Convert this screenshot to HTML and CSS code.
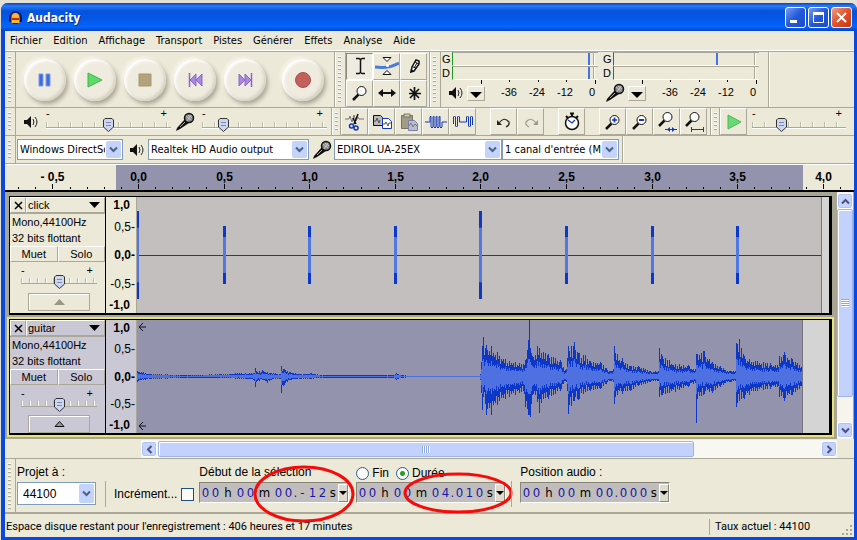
FILE: index.html
```html
<!DOCTYPE html>
<html lang="fr">
<head>
<meta charset="utf-8">
<title>Audacity</title>
<link rel="stylesheet" href="styles.css">
</head>
<body>
<svg width="0" height="0" class="defs" aria-hidden="true">
  <defs>
    <symbol id="speaker" viewBox="0 0 15 14"><path d="M1 5h3l4-4v12l-4-4H1z" fill="#111"/><path d="M10 4q2 3 0 6M12 2q4 5 0 10" fill="none" stroke="#222"/></symbol>
    <symbol id="mic" viewBox="0 0 20 20"><path d="M1 19l1-3 8-9 4 4-9 6z" fill="#111"/><circle cx="14" cy="6" r="4.500" fill="#888" stroke="#111" stroke-width="1.500"/><path d="M11 4l5 4M13 3l4 3M16 3l-4 6" stroke="#ddd" stroke-width=".7"/><path d="M5 15l5-5" stroke="#aaa"/></symbol>
    <symbol id="chev" viewBox="0 0 9 7"><path d="M1 1.500l3.500 3.500L8 1.500" fill="none" stroke="#4d6185" stroke-width="2"/></symbol>
    <symbol id="lens" viewBox="0 0 20 20"><path d="M3 17l5.500-5.500" stroke="#111" stroke-width="2.500"/><circle cx="11.500" cy="8" r="4.500" fill="#fff" stroke="#111"/></symbol>
  </defs>
</svg>
<main class="window">
  <header class="title">
    <svg width="15" height="15" viewBox="0 0 15 15"><circle cx="7.500" cy="7.500" r="6" fill="#152a9a" stroke="#071458"/><path d="M3.500 8q0-5 4-5t4 5v5h-8z" fill="#ffb52c"/><path d="M4 9h7" stroke="#c22c12" stroke-width="2"/><path d="M2 7v5M13 7v5" stroke="#0a1660" stroke-width="2"/></svg>
    <h1>Audacity</h1>
    <button class="cap" aria-label="Réduire"><svg width="19" height="19"><path d="M4 13.500h7" stroke="#fff" stroke-width="3"/></svg></button>
    <button class="cap" aria-label="Agrandir"><svg width="19" height="19"><path d="M4.500 5.500h10v9h-10z" fill="none" stroke="#fff"/><path d="M4 5.500h11" stroke="#fff" stroke-width="3"/></svg></button>
    <button class="cap close" aria-label="Fermer"><svg width="19" height="19"><path d="M5 5l9 9M14 5l-9 9" stroke="#fff" stroke-width="2"/></svg></button>
  </header>
  <nav class="menu">
    <a href="#">Fichier</a><a href="#">Edition</a><a href="#">Affichage</a><a href="#">Transport</a><a href="#">Pistes</a><a href="#">Générer</a><a href="#">Effets</a><a href="#">Analyse</a><a href="#">Aide</a>
  </nav>

  <div class="row row-a">
    <section class="bar transport">
      <i class="grip"></i>
      <button class="round" aria-label="Pause"><svg width="20" height="20"><path d="M4 4h4v12H4zM11 4h4v12h-4z" fill="#3f6ce0" stroke="#7d9bea"/></svg></button>
      <button class="round" aria-label="Lecture"><svg width="20" height="20"><path d="M3 3l14 7-14 7z" fill="#5cdb68" stroke="#3eb34c"/></svg></button>
      <button class="round" aria-label="Stop"><svg width="20" height="20"><path d="M4 4h12v12H4z" fill="#b3a27c" stroke="#a59772"/></svg></button>
      <button class="round" aria-label="Début"><svg width="20" height="20"><path d="M4.500 3v14" stroke="#8a66cc" stroke-width="1.500"/><path d="M11 4v12l-6-6zM17 4v12l-6-6z" fill="#a988e0" stroke="#8a66cc"/></svg></button>
      <button class="round" aria-label="Fin"><svg width="20" height="20"><path d="M16.500 3v14" stroke="#8a66cc" stroke-width="1.500"/><path d="M4 4v12l6-6zM10 4v12l6-6z" fill="#a988e0" stroke="#8a66cc"/></svg></button>
      <button class="round rec" aria-label="Enregistrer"><svg width="20" height="20"><circle cx="10" cy="10" r="7.500" fill="#c4605c" stroke="#a9504c"/></svg></button>
    </section>
    <section class="bar tools">
      <i class="grip"></i>
      <div class="toolgrid">
        <button class="tb on" aria-label="Sélection"><svg width="20" height="20"><path d="M6 2.500h3l1.500 1 1.500-1h3M6 17.500h3l1.500-1 1.500 1h3M10.500 3v14" fill="none" stroke="#111" stroke-width="1.500"/></svg></button>
        <button class="tb" aria-label="Niveau"><svg width="24" height="22"><path d="M8 2.500h8l-4 4zM8 19.500h8l-4-4z" fill="#fff" stroke="#111"/><path d="M0 12q14 2 24-4" fill="none" stroke="#4a7ce0" stroke-width="3"/><circle cx="12.500" cy="10.500" r="1.500" fill="#fff"/></svg></button>
        <button class="tb" aria-label="Dessin"><svg width="20" height="20"><path d="M7 16l1-5 4-7 3 1v3l-5 7z" fill="#fff" stroke="#111" stroke-width="1.500"/><path d="M11 6l4 2M9 11l3 1M13 7l-3 5" stroke="#111"/><path d="M6 17l1-4 3 2z" fill="#111"/></svg></button>
        <button class="tb" aria-label="Zoom"><svg width="20" height="20"><use href="#lens"/></svg></button>
        <button class="tb" aria-label="Glissement"><svg width="20" height="20"><path d="M4 10h12" stroke="#111" stroke-width="2"/><path d="M1 10l5-4v8zM19 10l-5-4v8z" fill="#111"/></svg></button>
        <button class="tb" aria-label="Multi-outils"><svg width="20" height="20"><path d="M10.500 4v13M5 10.500h12M6 6l9 9M15 6l-9 9" stroke="#111" stroke-width="1.700"/></svg></button>
      </div>
    </section>
    <section class="bar meters">
      <i class="grip"></i>
      <div class="meter play">
        <div class="chan"><span>G</span><b><i></i></b></div>
        <div class="chan"><span>D</span><b><i></i></b></div>
        <svg class="mticks" width="150" height="4"><path d="M39.500 0v4M67.500 0v2M96.500 0v2M124.500 0v2M153.500 0v4"/></svg>
        <div class="scale"><svg width="15" height="14"><use href="#speaker"/></svg><button class="drop" aria-label="Options de lecture"></button><span>-36</span><span>-24</span><span>-12</span><span>0</span></div>
      </div>
      <div class="meter record">
        <div class="chan"><span>G</span><b><i></i></b></div>
        <div class="chan"><span>D</span><b></b></div>
        <svg class="mticks" width="150" height="4"><path d="M39.500 0v4M67.500 0v2M96.500 0v2M124.500 0v2M153.500 0v4"/></svg>
        <div class="scale"><svg width="20" height="20"><use href="#mic"/></svg><button class="drop" aria-label="Options d'enregistrement"></button><span>-36</span><span>-24</span><span>-12</span><span>0</span></div>
      </div>
    </section>
  </div>

  <div class="row row-b">
    <section class="bar mixer">
      <i class="grip"></i>
      <svg width="15" height="14"><use href="#speaker"/></svg>
      <label class="slider"><span>-</span><span>+</span><input type="range" min="0" max="100" value="50" aria-label="Volume de sortie"></label>
      <svg width="20" height="20"><use href="#mic"/></svg>
      <label class="slider"><span>-</span><span>+</span><input type="range" min="0" max="100" value="14" aria-label="Volume d'entrée"></label>
    </section>
    <section class="bar edit">
      <i class="grip"></i>
      <button class="tb" aria-label="Couper"><svg width="22" height="22"><path d="M1 8h4l1-3 2 6 2-7 2 6 2-4 1 2h5" fill="none" stroke="#777"/><path d="M14 3l-4 10M9 7l3 6" stroke="#111" stroke-width="1.500"/><circle cx="7.500" cy="15" r="2" fill="none" stroke="#1238b8" stroke-width="1.500"/><circle cx="12" cy="17" r="2" fill="none" stroke="#1238b8" stroke-width="1.500"/></svg></button>
      <button class="tb" aria-label="Copier"><svg width="22" height="22"><path d="M2.500 4.500h7l2 2v8h-9z" fill="#bbb" stroke="#111"/><path d="M3 10h2l1-3 2 5 1-3" fill="none" stroke="#555"/><path d="M11.500 7.500h6l3 3v7h-9z" fill="#fff" stroke="#1238b8"/><path d="M12 13h2l1-2 2 4 1-3h2" fill="none" stroke="#555"/></svg></button>
      <button class="tb" aria-label="Coller"><svg width="22" height="22"><path d="M3.500 4.500h11v13h-11z" fill="#a39c82" stroke="#77735f"/><path d="M6 3h6v3H6z" fill="#ccc" stroke="#77735f"/><path d="M10.500 9.500h6l3 3v7h-9z" fill="#b9bdd0" stroke="#7a80a8"/><path d="M11 15l2-3 2 4 2-3 2 2" fill="none" stroke="#777"/></svg></button>
      <button class="tb" aria-label="Rogner"><svg width="24" height="20"><path d="M1 10h5V5q1-2 1 0v10q1 2 2 0V5q1-2 1 0v10q1 2 2 0V5q1-2 1 0v10q1 2 2 0V5q1-2 1 0v10q1 2 2 0v-5h5" fill="none" stroke="#1238b8"/></svg></button>
      <button class="tb" aria-label="Silence"><svg width="24" height="20"><path d="M2.500 12V5q1-2 2 0v9q1 2 2 0V5q1-2 2 0v5h7V5q1-2 2 0v9q1 2 2 0V5q1-2 2 0v8" fill="none" stroke="#1238b8"/></svg></button>
      <button class="tb gap" aria-label="Annuler"><svg width="20" height="20"><path d="M5 11q5-7 10-1 1 3-3 5" fill="none" stroke="#222" stroke-width="1.200"/><path d="M3 8v5h5z" fill="#222"/></svg></button>
      <button class="tb" aria-label="Refaire"><svg width="20" height="20"><path d="M15 11q-5-7-10-1-1 3 3 5" fill="none" stroke="#999" stroke-width="1.200"/><path d="M17 8v5h-5z" fill="#999"/></svg></button>
      <button class="tb gap" aria-label="Minuteur"><svg width="20" height="22"><circle cx="10" cy="12" r="6.500" fill="#fff" stroke="#111" stroke-width="1.500"/><path d="M8 2.500h4M10 3v3M4 5l2 2M16 5l-2 2" stroke="#111" stroke-width="2"/><path d="M6 9l4 3 3-3" fill="none" stroke="#1238b8" stroke-width="1.200"/></svg></button>
      <button class="tb gap" aria-label="Zoom avant"><svg width="20" height="20"><use href="#lens"/><path d="M9 8h5M11.500 5.500v5" stroke="#1238b8" stroke-width="1.700"/></svg></button>
      <button class="tb" aria-label="Zoom arrière"><svg width="20" height="20"><use href="#lens"/><path d="M9 8h5" stroke="#1238b8" stroke-width="2"/></svg></button>
      <button class="tb" aria-label="Ajuster la sélection"><svg width="22" height="22"><use href="#lens" y="-2" width="20" height="20"/><path d="M9 18.500h12" stroke="#1238b8"/><path d="M11 18.500l3-2.500v5zM19 18.500l-3-2.500v5z" fill="#1238b8"/></svg></button>
      <button class="tb" aria-label="Ajuster le projet"><svg width="22" height="22"><use href="#lens" y="-2" width="20" height="20"/><path d="M8.500 16v5M20.500 16v5M9 18.500h12" stroke="#1238b8"/></svg></button>
    </section>
    <section class="bar speed">
      <i class="grip"></i>
      <button class="tb" aria-label="Lecture à vitesse"><svg width="20" height="20"><path d="M4 3l13 7-13 7z" fill="#6bd877" stroke="#4cb85a"/></svg></button>
      <label class="slider"><span>-</span><span>+</span><input type="range" min="0" max="100" value="29" aria-label="Vitesse"></label>
    </section>
  </div>

  <div class="row row-c">
    <section class="bar device">
      <i class="grip"></i>
      <span class="combo host"><select aria-label="Hôte audio"><option>Windows DirectSound</option></select><i><svg width="9" height="7"><use href="#chev"/></svg></i></span>
      <svg width="15" height="14"><use href="#speaker"/></svg>
      <span class="combo out"><select aria-label="Sortie"><option>Realtek HD Audio output</option></select><i><svg width="9" height="7"><use href="#chev"/></svg></i></span>
      <svg width="20" height="20"><use href="#mic"/></svg>
      <span class="combo in"><select aria-label="Entrée"><option>EDIROL UA-25EX</option></select><i><svg width="9" height="7"><use href="#chev"/></svg></i></span>
      <span class="combo ch"><select aria-label="Canaux"><option>1 canal d'entrée (Mono)</option></select><i><svg width="9" height="7"><use href="#chev"/></svg></i></span>
    </section>
  </div>

  <svg class="ruler" id="ruler" role="img" aria-label="Règle temporelle"></svg>

  <div class="project">
    <div class="tracks">
      <article class="track">
        <div class="panel">
          <div class="name"><button aria-label="Fermer la piste"><svg width="9" height="9"><path d="M1 1l7 7M8 1l-7 7" stroke="#000" stroke-width="1.500"/></svg></button><button class="tname">click<svg width="11" height="6"><path d="M0 0h11l-5.500 6z"/></svg></button></div>
          <p>Mono,44100Hz<br>32 bits flottant</p>
          <div class="ms"><button>Muet</button><button>Solo</button></div>
          <label class="slider"><span>-</span><span>+</span><input type="range" min="0" max="100" value="50" aria-label="Gain"></label>
          <button class="fold" aria-label="Replier"><svg width="11" height="6"><path d="M0 6h11l-5.500-6z" fill="#9a9789"/></svg></button>
        </div>
        <div class="vr"><b>1,0</b><span>0,5-</span><b>0,0-</b><span>-0,5-</span><b>-1,0</b></div>
        <svg class="wave" id="click" role="img" aria-label="Forme d'onde click"></svg>
      </article>
      <article class="track sel">
        <div class="panel">
          <div class="name"><button aria-label="Fermer la piste"><svg width="9" height="9"><path d="M1 1l7 7M8 1l-7 7" stroke="#000" stroke-width="1.500"/></svg></button><button class="tname">guitar<svg width="11" height="6"><path d="M0 0h11l-5.500 6z"/></svg></button></div>
          <p>Mono,44100Hz<br>32 bits flottant</p>
          <div class="ms"><button>Muet</button><button>Solo</button></div>
          <label class="slider"><span>-</span><span>+</span><input type="range" min="0" max="100" value="50" aria-label="Gain"></label>
          <button class="fold" aria-label="Replier"><svg width="11" height="6"><path d="M1 5.500h9l-4.500-5z" fill="#999" stroke="#111"/></svg></button>
        </div>
        <div class="vr"><b>1,0</b><span>0,5-</span><b>0,0-</b><span>-0,5-</span><b>-1,0</b></div>
        <svg class="wave" id="guitar" role="img" aria-label="Forme d'onde guitar"></svg>
      </article>
    </div>
    <div class="vscroll">
      <button aria-label="Haut"><svg width="9" height="7"><path d="M1 5.500L4.500 2 8 5.500" fill="none" stroke="#4d4f85" stroke-width="2"/></svg></button>
      <div class="thumb"><i></i></div>
      <button class="end" aria-label="Bas"><svg width="9" height="7"><path d="M1 1.500L4.500 5 8 1.500" fill="none" stroke="#4d4f85" stroke-width="2"/></svg></button>
    </div>
  </div>
  <div class="hscroll">
    <button aria-label="Gauche"><svg width="7" height="9"><path d="M5.500 1L2 4.500 5.500 8" fill="none" stroke="#4d4f85" stroke-width="2"/></svg></button>
    <div class="thumb"><i></i></div>
    <button class="end" aria-label="Droite"><svg width="7" height="9"><path d="M1.500 1L5 4.500 1.500 8" fill="none" stroke="#4d4f85" stroke-width="2"/></svg></button>
  </div>

  <section class="selection">
    <i class="grip"></i>
    <div class="col rate"><label for="rate">Projet à :</label><span class="combo"><select id="rate"><option>44100</option></select><i><svg width="9" height="7"><use href="#chev"/></svg></i></span></div>
    <label class="snap">Incrément... <input type="checkbox"></label>
    <div class="col start"><span class="head">Début de la sélection</span>
      <div class="time"><i>0</i><i>0</i><b>h</b><i>0</i><i>0</i><b class="m">m</b><i>0</i><i>0</i><i class="dot">.</i><i>-</i><i>1</i><i>2</i><b class="s">s</b><button aria-label="Format du début"></button></div>
      <svg class="mark m1" viewBox="0 0 104 58"><ellipse cx="52" cy="29" rx="49" ry="27"/></svg>
    </div>
    <div class="col length"><div class="head"><label><input type="radio" name="mode">Fin</label><label><input type="radio" name="mode" checked>Durée</label></div>
      <div class="time"><i>0</i><i>0</i><b>h</b><i>0</i><i>0</i><b class="m">m</b><i>0</i><i>4</i><i class="dot">.</i><i>0</i><i>1</i><i>0</i><b class="s">s</b><button aria-label="Format de la durée"></button></div>
      <svg class="mark m2" viewBox="0 0 110 42"><ellipse cx="55" cy="21" rx="53" ry="19"/></svg>
    </div>
    <div class="col pos"><span class="head">Position audio :</span>
      <div class="time"><i>0</i><i>0</i><b>h</b><i>0</i><i>0</i><b class="m">m</b><i>0</i><i>0</i><i class="dot">.</i><i>0</i><i>0</i><i>0</i><b class="s">s</b><button aria-label="Format de la position"></button></div>
    </div>
  </section>
  <footer class="status"><span>Espace disque restant pour l'enregistrement : 406 heures et 17 minutes</span><span class="actual">Taux actuel : 44100</span>
    <svg class="size" width="12" height="12"><path d="M9 1h2v2H9zM5 5h2v2H5zM9 5h2v2H9zM1 9h2v2H1zM5 9h2v2H5zM9 9h2v2H9z" fill="#aaa792"/></svg></footer>
</main>
<script src="app.js"></script>
</body>
</html>
```
FILE: app.js
```js
const ORIGIN = 134, SECOND = 171.2;
const rect = (x, y, w, h, fill) => `<rect x="${x}" y="${y}" width="${w}" height="${h}" fill="${fill}"/>`;

function drawRuler() {
  let out = rect(111, 1, 687, 25, '#9493ae');
  for (let n = -8; n <= 41; n++) {
    const x = Math.round(ORIGIN + n * SECOND / 10) - .5;
    const major = n % 5 === 0;
    out += `<path d="M${x} ${major ? 20 : 23}V25" stroke="#000"/>`;
    if (major) {
      const label = (n < 0 ? '- ' : '') + Math.abs(n / 10).toFixed(1).replace('.', ',');
      out += `<text x="${x}" y="17">${label}</text>`;
    }
  }
  document.getElementById('ruler').innerHTML = out;
}

function drawClick() {
  let out = rect(0, 0, 684, 120, '#c2bfbe') + rect(684, 0, 1, 120, '#77757a') + rect(0, 58, 684, 1, '#0d3bb4');
  for (let n = 0; n < 8; n++) {
    const x = Math.round(n * SECOND / 2), h = n % 4 ? 29 : 44, w = n ? 3 : 2;
    out += rect(n ? x : 0, 58 - h, w, h * 2, '#0c37cc') + rect(n ? x : 0, 58 - h * .62, w, h * 1.24, '#5077e4');
  }
  document.getElementById('click').innerHTML = out;
}

/* time offset in pixels, peak above, peak below */
const PEAKS = [[0,5,5],[6,4,3],[13,2,2],[50,1,1],[83,2,1],[108,3,2],[116,3,3],[118,8,10],[120,4,4],[125,6,3],[130,4,6],[136,3,2],[143,2,2],[144,10,16],[147,7,8],[153,4,3],[163,2,2],[173,3,2],[185,1,1],[250,1,1],[257,1,1],[259,3,3],[263,1,1],[275,0,0],[342,0,0],
[343,2,3],[345,30,33],[346,39,20],[349,31,38],[354,30,38],[360,24,28],[368,17,22],[378,14,18],[386,12,14],[388,16,30],[391,36,38],[392,56,38],[393,28,40],[395,20,18],[400,30,25],[402,28,36],[406,24,22],[411,22,22],[418,18,17],[423,16,14],[428,6,4],[430,18,14],[431,30,37],[437,34,24],[441,23,23],[448,21,15],[453,15,14],[463,14,12],[469,8,7],[473,5,4],[476,7,5],[477,30,27],[480,22,18],[485,18,17],[493,10,14],[501,10,9],[513,5,5],[521,5,4],[522,28,20],[525,20,18],[538,12,15],[551,11,10],[558,7,6],[559,22,46],[560,22,22],[567,25,17],[575,14,16],[583,10,10],[593,5,5],[598,5,4],[599,33,30],[602,37,24],[607,20,22],[618,15,14],[633,13,12],[640,11,10],[642,20,20],[647,24,24],[655,17,18],[665,10,10]];

function drawGuitar() {
  const mid = 56;
  let peaks = '', body = '', k = 0;
  for (let x = 0; x < 665; x++) {
    while (k < PEAKS.length - 2 && x >= PEAKS[k + 1][0]) k++;
    const [ax, au, ad] = PEAKS[k], [bx, bu, bd] = PEAKS[k + 1];
    const t = (x - ax) / (bx - ax);
    const up = au + (bu - au) * t, down = ad + (bd - ad) * t;
    const noise = Math.abs(Math.sin(x * 12.9898) * 43758.5453 % 1);
    const f = x === ax ? 1 : (x % 2 ? .55 : .78) + noise * .22;
    peaks += `M${x + .5} ${mid - Math.round(up * f)}V${mid + 1 + Math.round(down * f)}`;
    body += `M${x + .5} ${mid - Math.round(Math.min(up * .5, 17) * f)}V${mid + 1 + Math.round(Math.min(down * .5, 17) * f)}`;
  }
  document.getElementById('guitar').innerHTML =
    rect(0, 0, 665, 120, '#9493ae') + rect(665, 0, 1, 120, '#77757f') +
    `<path d="${peaks}" stroke="#0d37c8"/><path d="${body}" stroke="#4f70e0"/>` +
    '<path d="M9 7H2M6 3L2 7l4 4M9 106H2M6 102l-4 4 4 4" fill="none" stroke="#111"/>';
}

drawRuler();
drawClick();
drawGuitar();
```
FILE: styles.css
```css
* { box-sizing: border-box; }
body { margin: 0; padding-top: 3px; background: #e3e1d4; font: 11px/14px "DejaVu Sans Condensed", "DejaVu Sans", sans-serif; color: #000; }
button { padding: 0; border: 0; background: none; font: inherit; color: inherit; }
svg { display: block; flex: none; }
.defs { position: absolute; }
i, b { font-style: normal; }

.window { display: flex; flex-direction: column; min-height: calc(100vh - 3px); margin-left: 1px; border: solid #0b48e0; border-width: 0 3px 3px 4px; border-radius: 7px 7px 0 0; background: #ece9d8; }
.title { display: flex; align-items: center; gap: 2px; height: 28px; margin: 0 -3px 0 -4px; padding: 1px 5px 0 7px; border-radius: 7px 7px 0 0; background: linear-gradient(#0a3ecb, #2a7bf5 3px, #0453dd 8px, #0458e8 16px, #0565fb 24px, #0344c4); }
.title h1 { flex: 1; margin: 0 0 0 2px; color: #fff; font: bold 12px/18px "DejaVu Sans Condensed", sans-serif; text-shadow: 1px 1px #0a2a80; }
.cap { width: 21px; height: 21px; border: 1px solid #fff; border-radius: 3px; background: linear-gradient(135deg, #7a9cf0, #2358dc 50%, #1d4bc4); }
.cap.close { background: linear-gradient(135deg, #f0a080, #e0502c 50%, #c23a16); }
.menu { display: flex; gap: 11px; height: 20px; padding: 3px 5px; border-bottom: 1px solid #fff; }
.menu a { color: #000; text-decoration: none; }

.row { display: flex; border-top: 1px solid #aca899; }
.row-a { height: 56px; }
.row-b { height: 28px; }
.row-c { height: 28px; }
.bar { display: flex; align-items: center; border-right: 1px solid #aca899; box-shadow: 1px 0 #fff; }
.grip { align-self: stretch; flex: none; width: 11px; border-right: 1px solid #aca899; background: repeating-linear-gradient(#fff 0 1px, #aca899 1px 2px, transparent 2px 4px) content-box; padding: 4px 4px 3px 3px; }

.transport { width: 330px; }
.round { display: grid; place-items: center; width: 42px; height: 42px; margin-left: 8px; border-radius: 50%; background: #efebdf; box-shadow: inset 2px 2px 3px #fff, inset -2px -2px 3px #d5d0c1, 2px 3px 4px #aaa594, -2px -2px 3px #f8f5ea; }
.rec { margin-left: 16px; }
.tools { width: 95px; }
.toolgrid { display: grid; grid-template-columns: repeat(3, 27px); }
.tb { display: grid; place-items: center; flex: none; width: 27px; height: 27px; border: 1px solid; border-color: #fff #aca899 #aca899 #fff; }
.tb.on { border-color: #8a877a #fff #fff #8a877a; background: #eeebe0; }
.meters { width: 339px; align-items: stretch; }
.meter { width: 157px; padding-left: 1px; }
.meter + .meter { margin-left: 4px; }
.chan { display: flex; height: 14px; font: 11px/14px "Liberation Sans", sans-serif; }
.chan span { width: 10px; }
.chan b { flex: 1; position: relative; border: solid #fff; border-width: 0 0 1px; border-left: 1px solid #1f9a28; border-top: 1px solid #aca899; background: linear-gradient(#fff, #fff) right 3px top / 1px 100% no-repeat, linear-gradient(#aca899, #aca899) right 4px top / 1px 100% no-repeat; }
.record .chan b { border-left-color: #a8382c; }
.chan b i { display: block; width: 2px; height: 12px; margin-left: 93%; background: #4a70e8; }
.record .chan b i { margin-left: 70%; }
.mticks { width: 100%; stroke: #000; }
.scale { display: flex; align-items: center; height: 18px; font: 11px/14px "Liberation Sans", sans-serif; }
.scale > svg { margin-left: 6px; }
.record .scale > svg { margin-left: 2px; }
.drop { width: 18px; height: 15px; margin-left: 4px; border: 1px solid; border-color: #fff #aca899 #aca899 #fff; }
.record .drop { margin-left: 3px; }
.drop::before { content: ""; display: block; width: 0; margin: 3px auto 0; border: 6px solid transparent; border-top-color: #000; border-bottom: 0; }
.scale span { width: 28px; text-align: right; padding-bottom: 3px; }
.drop + span { margin-left: 4px; }
.scale span:last-child { width: 22px; }

.mixer { width: 327px; }
.mixer > svg { margin-left: 7px; }
.mixer > .slider + svg { margin-left: 4px; }
.slider { display: grid; grid-template-columns: 1fr 1fr; align-content: start; width: 125px; height: 26px; margin-left: 8px; font: 11px/9px "Liberation Sans", sans-serif; }
.slider span { height: 8px; }
.panel .slider span { padding-top: 1px; }
.slider span:nth-child(2) { text-align: right; padding-right: 4px; }
.slider input { grid-column: 1 / 3; appearance: none; width: 100%; height: 17px; margin: 0; background: linear-gradient(#aca899, #aca899) 0 10px / 100% 1px no-repeat, linear-gradient(#fff, #fff) 0 11px / 100% 1px no-repeat, repeating-linear-gradient(90deg, #bdb9aa 0 1px, #fff 1px 2px, transparent 2px 12px) 0 5px / 100% 5px no-repeat; }
.slider input::-webkit-slider-thumb { appearance: none; width: 11px; height: 14px; background: url("data:image/svg+xml,%3Csvg xmlns='http://www.w3.org/2000/svg' width='11' height='14'%3E%3Cpath d='M2 .5h7l1.500 1.500v7l-5 4.500-5-4.500V2z' fill='%23ccd6ee' stroke='%23333'/%3E%3Cpath d='M3 4.500h5M3 7.500h5' stroke='%23788ab5'/%3E%3C/svg%3E") no-repeat; }
.mixer > svg + .slider:last-child { margin-left: 7px; }
.edit { width: 379px; }
.edit .gap { margin-left: 14px; }
.speed { flex: 1; border-right: 0; box-shadow: none; }
.edit .grip, .speed .grip { width: 9px; padding-right: 2px; }
.speed .slider { width: 94px; margin-left: 5px; }

.device { width: 618px; }
.device > svg { margin: 0 4px 0 6px; }
.device > .out + svg { margin: 0 2px 0 3px; }
.combo { display: inline-block; position: relative; height: 21px; }
.combo select { appearance: none; width: 100%; height: 100%; padding: 0 17px 0 2px; border: 1px solid #7f9db9; border-radius: 0; background: #fff; color: #000; font: inherit; }
.combo i { position: absolute; top: 2px; right: 2px; bottom: 2px; display: grid; place-items: center; width: 15px; border-radius: 2px; background: #c3d3fb; pointer-events: none; }
.host { width: 106px; margin-left: 1px; }
.out { width: 161px; }
.in { width: 168px; }
.ch { width: 117px; }

.ruler { width: 100%; height: 29px; border-top: 1px solid #aca899; border-bottom: 2px solid #000; box-shadow: inset 0 1px #fff; font: bold 12px "Liberation Sans", sans-serif; text-anchor: middle; }

.project { display: flex; padding-right: 1px; background: #a9a595; }
.tracks { flex: 1; min-width: 0; padding: 4px 5px 0 4px; }
.track { display: flex; height: 119px; border: solid #000; border-width: 1px 3px 2px 1px; background: #d4d4d4; font: 11px/16px "Liberation Sans", sans-serif; }
.track.sel { height: 116px; margin: 4px 0; outline: 2px solid #e6e283; }
.panel { flex: none; display: flex; flex-direction: column; width: 96px; border-right: 1px solid #000; background: #ece9d8; }
.name, .ms { display: flex; flex: none; height: 16px; }
.name button, .ms button { border: 1px solid; border-color: #fff #aca899 #aca899 #fff; }
.name button { display: grid; place-items: center; width: 16px; line-height: 13px; }
.name .tname { flex: 1; display: flex; align-items: center; justify-content: space-between; padding: 0 4px 0 1px; }
.ms button { flex: 1; line-height: 13px; }
.panel p { margin: 0; padding: 0 2px; height: 33px; border-top: 1px solid #aca899; }
.panel .slider { width: 76px; margin: 3px 0 0 11px; }
.panel .slider input { background: linear-gradient(#aca899, #aca899) 0 10px / 100% 1px no-repeat, repeating-linear-gradient(90deg, #bdb9aa 0 1px, #fff 1px 2px, transparent 2px 8px) 0 5px / 100% 5px no-repeat; }
.fold { display: grid; place-items: center; width: 62px; height: 18px; margin: 2px 0 0 18px; border: 1px solid #aca899; box-shadow: inset 1px 1px #fff; }
.vr { flex: none; display: flex; flex-direction: column; justify-content: space-between; width: 31px; padding-right: 1px; border-right: 1px solid #aca899; background: #ece9d8; text-align: right; font: 12px/16px "Liberation Sans", sans-serif; }
.vr b:first-child { margin-bottom: -7px; padding-right: 5px; }
.vr b:last-child { margin-top: -7px; padding-right: 5px; }
.sel .panel, .sel .vr { background: #c9c8d4; }
.wave { flex: 1; min-width: 0; height: 100%; overflow: hidden; }

.vscroll { display: flex; flex-direction: column; width: 16px; padding: 1px 0; background: #f6f4ec; }
.vscroll button, .hscroll button { display: grid; place-items: center; flex: none; width: 16px; height: 16px; border: 1px solid #fff; border-radius: 3px; background: #c6d4fb; box-shadow: inset 0 0 0 1px #afc3f5; }
.thumb { display: grid; place-items: center; border: 1px solid #9db4ee; border-radius: 2px; background: #c3d2fc; box-shadow: inset 1px 1px #fff; }
.vscroll .thumb { height: 188px; }
.vscroll .end { margin-top: auto; }
.vscroll .thumb i { width: 8px; height: 8px; background: repeating-linear-gradient(#8ea7e8 0 1px, #fff 1px 2px); }
.hscroll { display: flex; height: 18px; margin: 1px 17px 0 136px; background: #f8f7f2; padding: 1px 0; }
.hscroll .thumb { width: 77%; margin-left: 1px; }
.hscroll .thumb i { width: 8px; height: 7px; background: repeating-linear-gradient(90deg, #8ea7e8 0 1px, #fff 1px 2px); }
.hscroll .end { margin-left: auto; }

.selection { display: flex; height: 56px; border-top: 1px solid #aca899; border-bottom: 2px solid #aca899; font: 12px/16px "Liberation Sans", sans-serif; }
.selection .grip { width: 11px; }
.col { position: relative; padding-top: 5px; }
.col > label, .head { display: flex; height: 18px; }
.head label { display: flex; align-items: center; gap: 3px; margin-right: 7px; }
.rate { width: 88px; padding-right: 9px; margin-left: 1px; }
.rate .combo { display: block; height: 23px; }
.rate select { padding-left: 5px; }
.snap { display: flex; align-items: center; gap: 4px; height: 26px; margin: 22px 0 0 0; padding-left: 8px; border-left: 1px solid #aca899; }
.snap input { appearance: none; width: 13px; height: 13px; margin: 0; border: 1px solid #1d5281; background: #fbfaf7; }
.head input { appearance: none; width: 13px; height: 13px; margin: 0; border: 1px solid #2d5f93; border-radius: 50%; background: #fbfbf9; }
.head input:checked { background: radial-gradient(#21a121 0 2px, #fbfbf9 3px); }
.start { margin-left: 5px; }
.length { margin-left: 7px; padding-right: 6px; }
.pos { margin-left: 8px; }
.length::after { content: ""; position: absolute; right: 0; top: 22px; height: 26px; border-right: 1px solid #aca899; }
.time { display: flex; align-items: center; height: 21px; border: 1px solid; border-color: #87847a #fff #fff #87847a; background: #c2bdbd; font: 13px/18px "DejaVu Sans Condensed", sans-serif; text-align: center; }
.time i { width: 10px; color: #1616a8; }
.time .dot { width: 4px; }
.time b { width: 15px; font-weight: normal; }
.time .m { width: 18px; }
.time .s { width: 11px; }
.time button { width: 10px; height: 18px; border: 1px solid; border-color: #fff #87847a #87847a #fff; background: #e0dccd; }
.time button::before { content: ""; display: block; width: 0; margin: 0 auto; border: 4px solid transparent; border-top-color: #000; border-bottom: 0; }
.mark { position: absolute; overflow: visible; fill: none; stroke: #f90a0a; stroke-width: 3; pointer-events: none; }
.m1 { left: 53px; top: 6px; width: 104px; height: 58px; }
.m2 { left: 47px; top: 13px; width: 110px; height: 42px; }
.status { display: flex; align-items: center; flex: 1; padding: 3px 1px 1px; font-family: Roboto, sans-serif; }
.actual { margin-left: auto; width: 144px; padding: 1px 0 1px 5px; border-left: 1px solid #aca899; }
.size { align-self: flex-end; margin-left: -12px; }
```
